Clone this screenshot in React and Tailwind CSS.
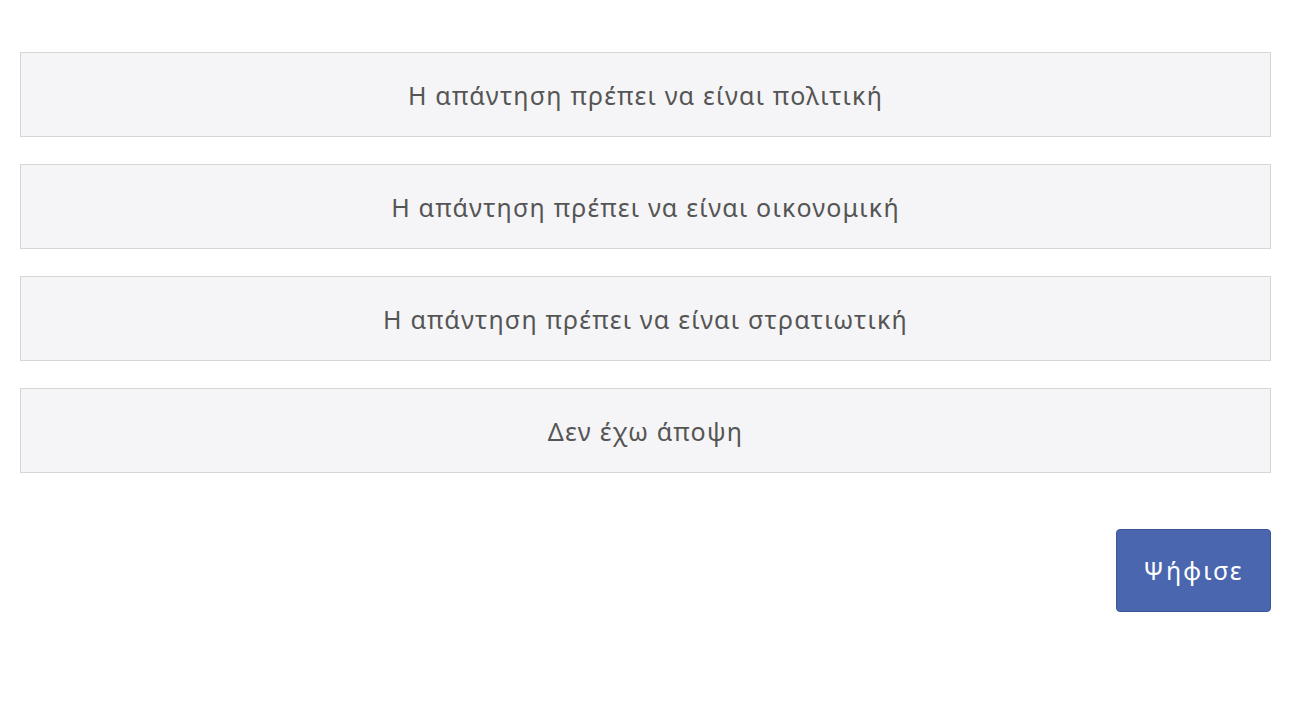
const options = [
  'Η απάντηση πρέπει να είναι πολιτική',
  'Η απάντηση πρέπει να είναι οικονομική',
  'Η απάντηση πρέπει να είναι στρατιωτική',
  'Δεν έχω άποψη',
];

export default function App() {
  return (
    <div className="min-h-screen bg-white pt-[52px] pl-[20px]" style={{ fontFamily: '"Noto Sans", Inter, sans-serif' }}>
      <div className="w-[1251px] flex flex-col gap-[27px]">
        {options.map((opt) => (
          <button
            key={opt}
            className="h-[85px] w-full flex items-center justify-center pt-[3px] bg-[#f5f5f7] border border-[#d6d6d8] text-[25px] font-normal text-[#555555] tracking-[1.2px]"
          >
            {opt}
          </button>
        ))}
      </div>
      <div className="w-[1251px] flex justify-end mt-[56px]">
        <button className="w-[155px] h-[83px] rounded-[4px] bg-[#4a66ae] border border-[#3c5597] text-white text-[25px] font-normal tracking-[2px]">
          Ψήφισε
        </button>
      </div>
    </div>
  );
}
